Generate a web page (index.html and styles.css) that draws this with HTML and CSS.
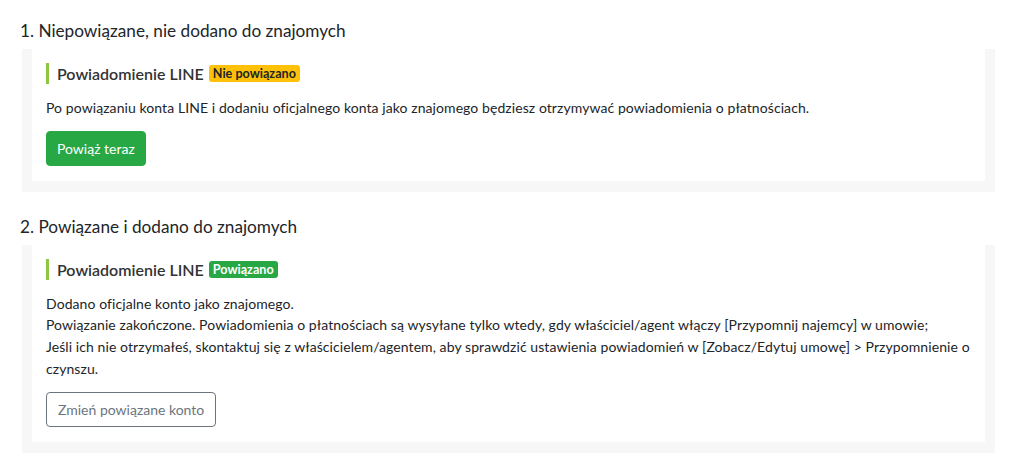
FILE: index.html
```html
<!DOCTYPE html>
<html lang="pl">
<head>
<meta charset="utf-8">
<link rel="stylesheet" href="styles.css">
</head>
<body>
<div class="page">
  <h2 class="step step-first">1. Niepowiązane, nie dodano do znajomych</h2>
  <div class="panel">
    <div class="card">
      <div class="card-title">Powiadomienie LINE <span class="badge badge-warn">Nie powiązano</span></div>
      <p class="card-text">Po powiązaniu konta LINE i dodaniu oficjalnego konta jako znajomego będziesz otrzymywać powiadomienia o płatnościach.</p>
      <button class="btn btn-success">Powiąż teraz</button>
    </div>
  </div>

  <h2 class="step">2. Powiązane i dodano do znajomych</h2>
  <div class="panel">
    <div class="card">
      <div class="card-title">Powiadomienie LINE <span class="badge badge-ok">Powiązano</span></div>
      <p class="card-text">Dodano oficjalne konto jako znajomego.<br>Powiązanie zakończone. Powiadomienia o płatnościach są wysyłane tylko wtedy, gdy właściciel/agent włączy [Przypomnij najemcy] w umowie;<br>Jeśli ich nie otrzymałeś, skontaktuj się z właścicielem/agentem, aby sprawdzić ustawienia powiadomień w [Zobacz/Edytuj umowę] &gt; Przypomnienie o czynszu.</p>
      <button class="btn btn-outline">Zmień powiązane konto</button>
    </div>
  </div>
</div>
</body>
</html>
```

FILE: styles.css
```css
* { box-sizing: border-box; }
html, body { margin: 0; padding: 0; background: #fff; }
body {
  font-family: Lato, "Open Sans", "Liberation Sans", sans-serif;
  color: #212529;
  font-size: 14px;
}
.page {
  padding: 0 20px 20px 22px;
}
.step {
  margin: 22px 0 5px -2px;
  font-size: 17.2px;
  line-height: 26px;
  font-weight: 400;
  color: #212529;
}
.step-first { margin-top: 18px; }
.panel {
  background: #f7f7f7;
  padding: 0 10px 11px;
}
.card {
  background: #fff;
  padding: 14px 14px 15px;
}
.card-title {
  border-left: 3px solid #8dc63f;
  padding-left: 8px;
  font-size: 16px;
  font-weight: 600;
  line-height: 21px;
  color: #333;
  display: flex;
  align-items: center;
  gap: 5px;
}
.badge {
  display: inline-block;
  font-size: 12.6px;
  font-weight: 700;
  line-height: 17px;
  padding: 0 4px;
  border-radius: 3px;
}
.badge-warn { background: #ffc107; color: #212529; }
.badge-ok { background: #28a745; color: #fff; }
.card-text {
  margin: 13px 0 12px;
  line-height: 21.7px;
  letter-spacing: 0.08px;
}
.btn {
  font-family: inherit;
  font-size: 14px;
  line-height: 21px;
  padding: 6px 10px;
  border-radius: 4px;
  cursor: pointer;
}
.btn-success {
  background: #28a745;
  border: 1px solid #28a745;
  color: #fff;
}
.btn-outline {
  background: #fff;
  border: 1px solid #6c757d;
  color: #6c757d;
  padding: 6px 11px;
}
```
